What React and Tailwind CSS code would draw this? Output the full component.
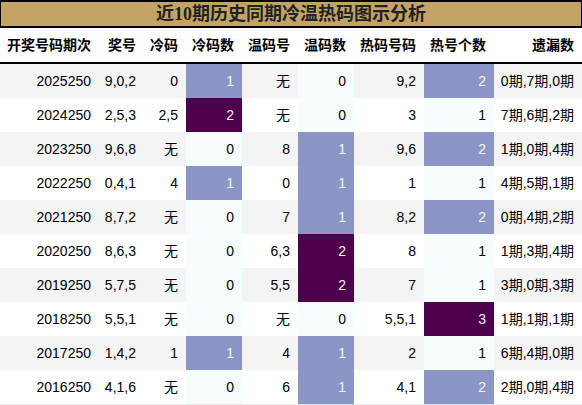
import React from "react";

const rows = [
  ["2025250", "9,0,2", "0", 1, "无", 0, "9,2", 2, "0期,7期,0期"],
  ["2024250", "2,5,3", "2,5", 2, "无", 0, "3", 1, "7期,6期,2期"],
  ["2023250", "9,6,8", "无", 0, "8", 1, "9,6", 2, "1期,0期,4期"],
  ["2022250", "0,4,1", "4", 1, "0", 1, "1", 1, "4期,5期,1期"],
  ["2021250", "8,7,2", "无", 0, "7", 1, "8,2", 2, "0期,4期,2期"],
  ["2020250", "8,6,3", "无", 0, "6,3", 2, "8", 1, "1期,3期,4期"],
  ["2019250", "5,7,5", "无", 0, "5,5", 2, "7", 1, "3期,0期,3期"],
  ["2018250", "5,5,1", "无", 0, "无", 0, "5,5,1", 3, "1期,1期,1期"],
  ["2017250", "1,4,2", "1", 1, "4", 1, "2", 1, "6期,4期,0期"],
  ["2016250", "4,1,6", "无", 0, "6", 1, "4,1", 2, "2期,0期,4期"],
];

const headers = ["开奖号码期次", "奖号", "冷码", "冷码数", "温码号", "温码数", "热码号码", "热号个数", "遗漏数"];
const gridCols = "grid grid-cols-[99px_45px_42px_56px_56px_56px_70px_70px_88px]";

function heat(level) {
  if (level === 0) return "bg-[#f7fcfd] text-black";
  if (level === 1) return "bg-[#8c96c6] text-[#f4f4f8]";
  return "bg-[#4d004b] text-[#f4f4f4]";
}

export default function App() {
  return (
    <div
      className="w-[582px] h-[405px] bg-white text-[14px] text-black"
      style={{ fontFamily: '"Liberation Sans", "Noto Sans CJK SC", sans-serif' }}
    >
      <div
        className="h-[28px] border-y-2 border-x border-black bg-[#c4a464] flex items-center justify-center text-[18px] font-bold text-[#222]"
        style={{ fontFamily: '"Liberation Serif", "Noto Sans CJK SC", serif' }}
      >
        近10期历史同期冷温热码图示分析
      </div>
      <div className={`${gridCols} h-[36px] border-b-2 border-black font-bold`}>
        {headers.map((h) => (
          <div key={h} className="flex items-center justify-end pr-2 leading-none">
            {h}
          </div>
        ))}
      </div>
      <div className="border-b border-[#e4e4e4]">
        {rows.map((r, i) => {
          const bg = i % 2 === 0 ? "bg-[#f4f4f4]" : "bg-white";
          return (
            <div key={r[0]} className={`${gridCols} h-[34px] ${bg}`}>
              {r.map((v, j) => {
                let cls = "";
                if (j === 3 || j === 5) cls = heat(v);
                if (j === 7) cls = heat(v - 1);
                return (
                  <div key={j} className={`flex items-center justify-end pr-2 ${cls}`}>
                    {v}
                  </div>
                );
              })}
            </div>
          );
        })}
      </div>
    </div>
  );
}
